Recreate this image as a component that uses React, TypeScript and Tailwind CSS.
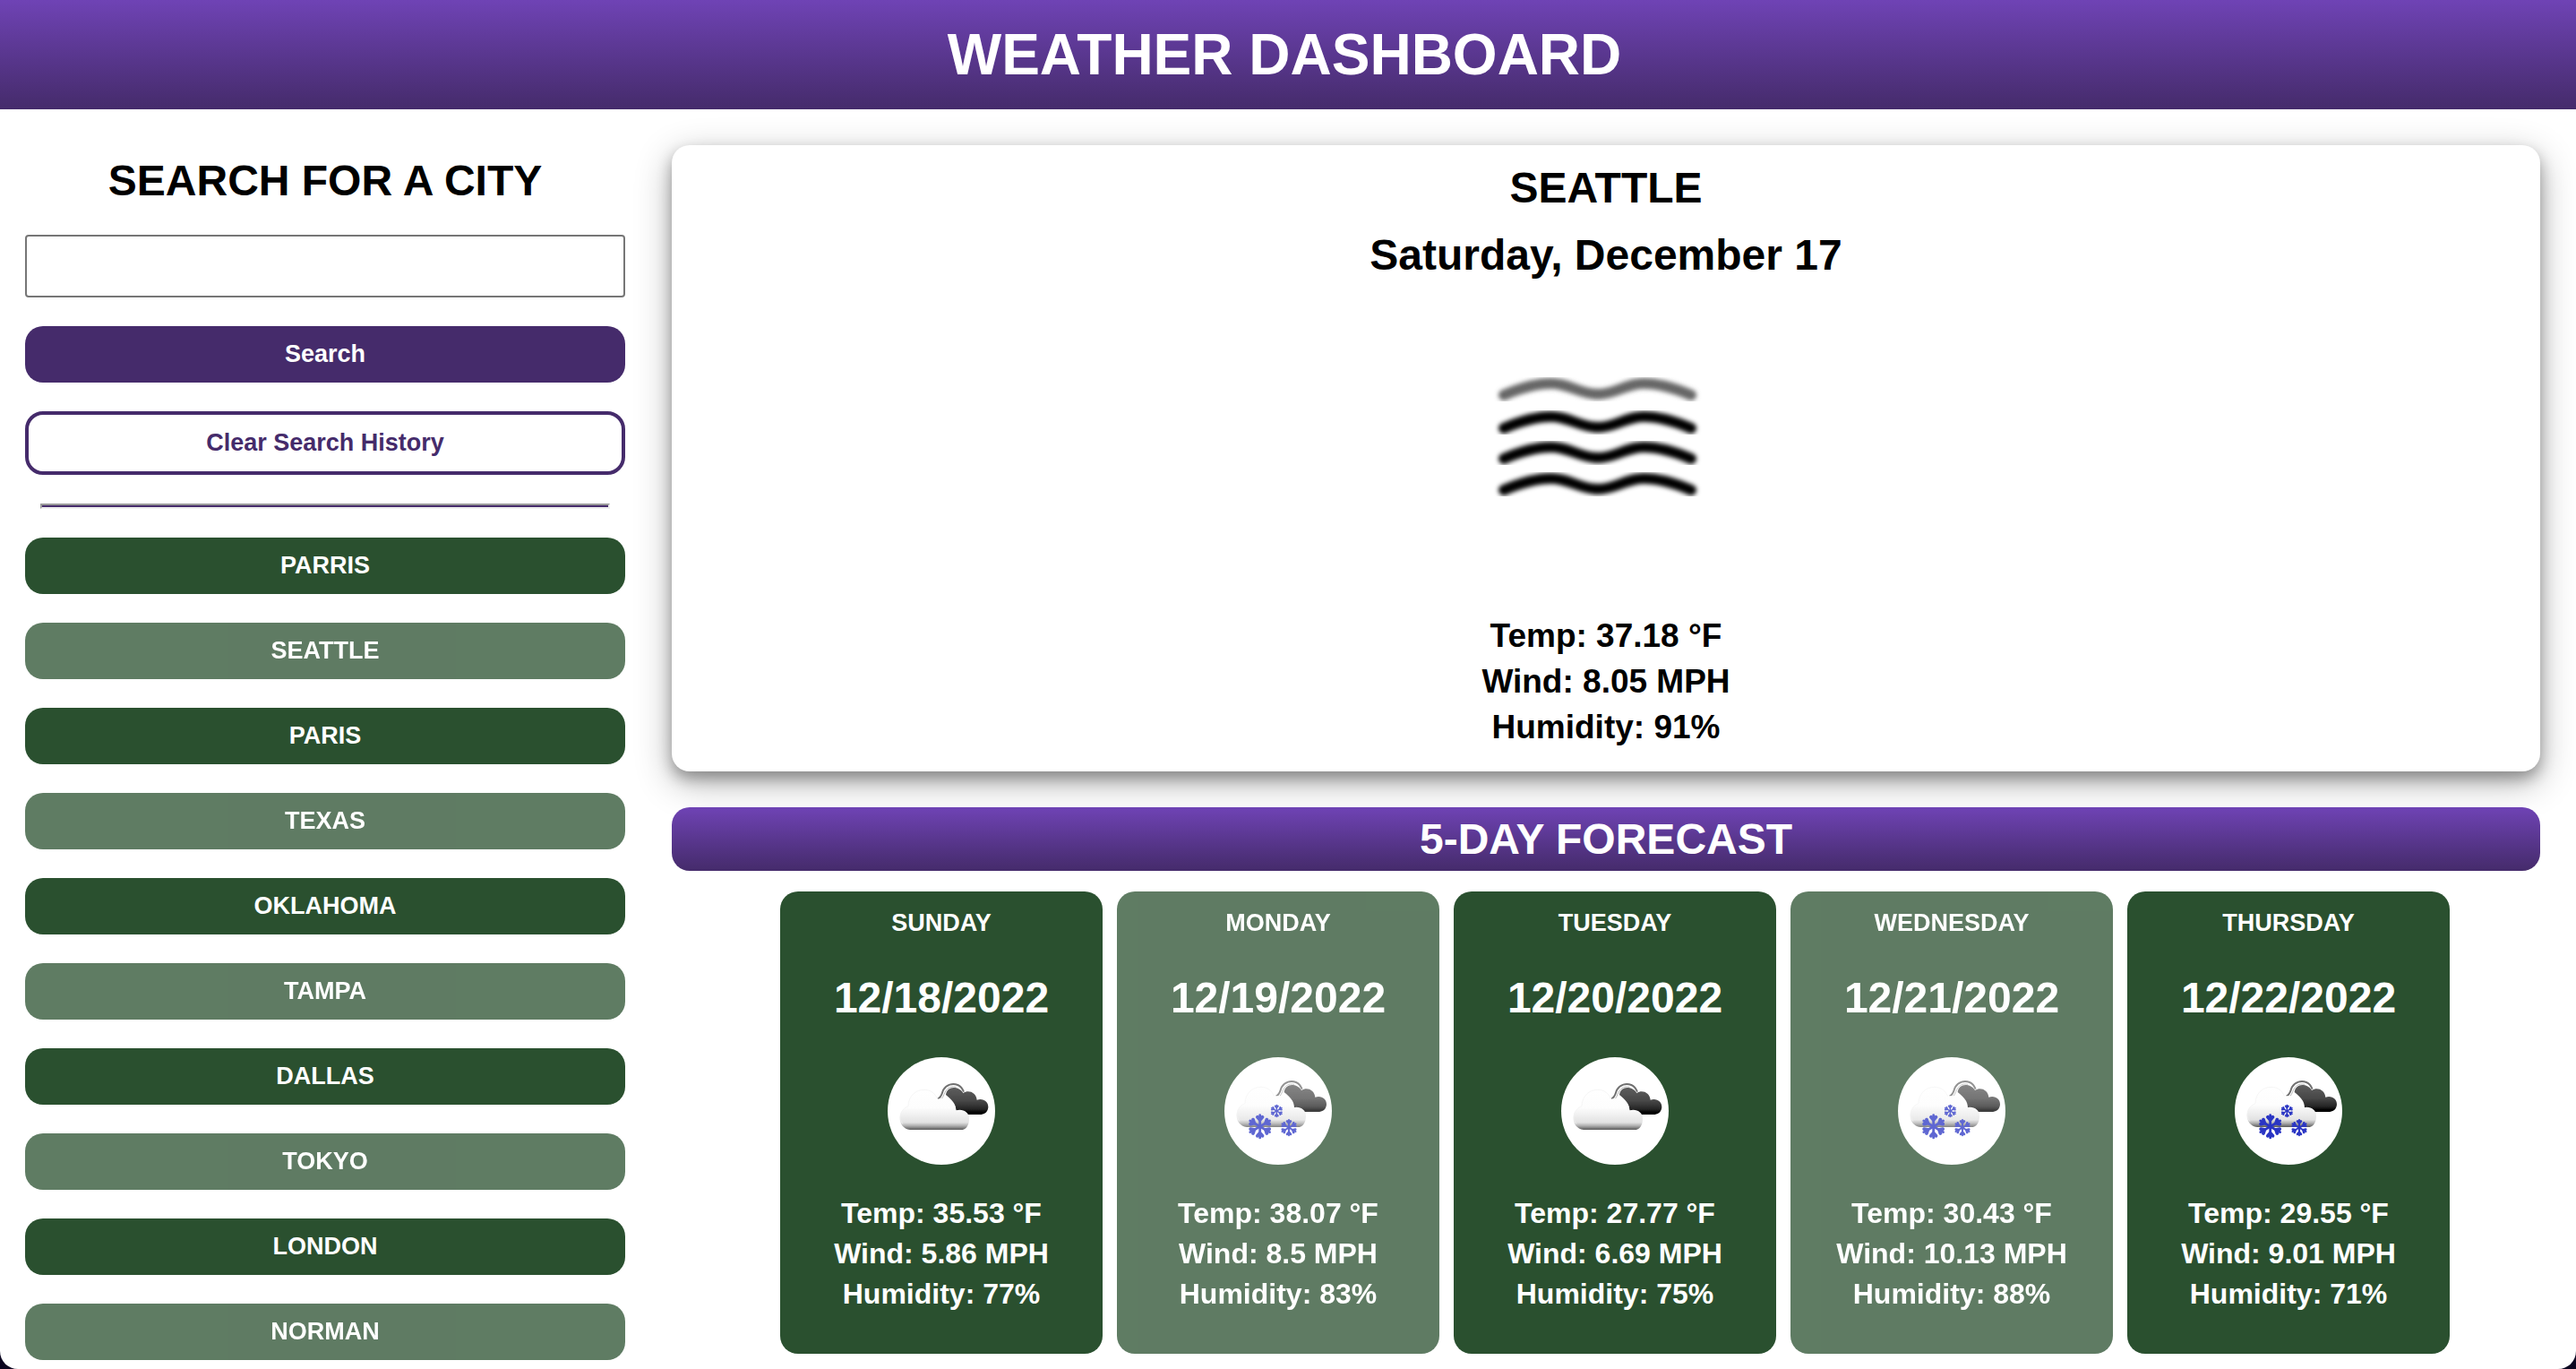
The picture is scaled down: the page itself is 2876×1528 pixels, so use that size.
import React from "react";

const cities = ["PARRIS", "SEATTLE", "PARIS", "TEXAS", "OKLAHOMA", "TAMPA", "DALLAS", "TOKYO", "LONDON", "NORMAN"];

const days = [
  { day: "SUNDAY", date: "12/18/2022", snow: false, temp: "35.53", wind: "5.86", humidity: "77" },
  { day: "MONDAY", date: "12/19/2022", snow: true, temp: "38.07", wind: "8.5", humidity: "83" },
  { day: "TUESDAY", date: "12/20/2022", snow: false, temp: "27.77", wind: "6.69", humidity: "75" },
  { day: "WEDNESDAY", date: "12/21/2022", snow: true, temp: "30.43", wind: "10.13", humidity: "88" },
  { day: "THURSDAY", date: "12/22/2022", snow: true, temp: "29.55", wind: "9.01", humidity: "71" },
];

function FogIcon() {
  const rows = [
    { y: 51, color: "#666" },
    { y: 88, color: "#000" },
    { y: 122, color: "#000" },
    { y: 157, color: "#000" },
  ];
  return (
    <svg viewBox="0 0 306 372" className="h-[372px] w-[306px]" role="img" aria-label="Fog">
      <defs>
        <filter id="fog-soft" x="-10%" y="-50%" width="120%" height="200%">
          <feGaussianBlur stdDeviation="2.5" />
        </filter>
      </defs>
      <g transform="translate(0 77)" fill="none" strokeWidth="12" strokeLinecap="round">
        {rows.map((r) => (
          <path
            key={r.y}
            filter="url(#fog-soft)"
            stroke={r.color}
            d={`M39 ${r.y + 1} C60 ${r.y - 8} 75 ${r.y - 12} 92 ${r.y - 12} C112 ${r.y - 12} 124 ${r.y} 144 ${r.y} C164 ${r.y} 175 ${r.y - 12} 195 ${r.y - 12} C212 ${r.y - 12} 227 ${r.y - 8} 248 ${r.y + 1}`}
          />
        ))}
      </g>
    </svg>
  );
}

function Flake({ x, y, r }: { x: number; y: number; r: number }) {
  return (
    <g transform={`translate(${x} ${y}) scale(${r / 40})`} stroke="#2b36c4" fill="none" strokeLinecap="round">
      {[0, 60, 120, 180, 240, 300].map((a) => (
        <g key={a} transform={`rotate(${a})`}>
          <path d="M0 -2 L0 -36" strokeWidth="8" />
          <path d="M-8 -30 L0 -21 L8 -30" strokeWidth="11" />
        </g>
      ))}
    </g>
  );
}

function CloudIcon({ snow }: { snow: boolean }) {
  return (
    <svg
      viewBox="33 30 360 360"
      className="size-[120px] rounded-full bg-white"
      role="img"
      aria-label={snow ? "Snow" : "Broken clouds"}
    >
      <defs>
        <linearGradient id="dark-cloud" x1="0" y1="130" x2="0" y2="222" gradientUnits="userSpaceOnUse">
          <stop offset="0" stopColor="#5e5e5e" />
          <stop offset="0.5" stopColor="#484848" />
          <stop offset="0.8" stopColor="#262626" />
          <stop offset="0.92" stopColor="#000" />
        </linearGradient>
        <linearGradient id="light-cloud" x1="0" y1="138" x2="0" y2="273" gradientUnits="userSpaceOnUse">
          <stop offset="0" stopColor="#fff" />
          <stop offset="0.45" stopColor="#fdfdfd" />
          <stop offset="0.82" stopColor="#e2e2e2" />
          <stop offset="0.9" stopColor="#b0b0b0" />
          <stop offset="1" stopColor="#5a5a5a" />
        </linearGradient>
        <filter id="cloud-soft" x="-10%" y="-10%" width="120%" height="120%">
          <feGaussianBlur stdDeviation="2.2" />
        </filter>
      </defs>
      <g filter="url(#cloud-soft)">
        <g transform={snow ? "translate(5 -9)" : undefined}>
          <path
            fill="url(#dark-cloud)"
            d="M228 156 C230 138 244 130 258 132 C272 134 282 142 286 150 C304 138 330 148 332 173 C352 166 371 178 370 198 C368 216 355 222 342 222 L285 222 C275 214 264 212 262 208 C262 186 248 172 228 156 Z"
          />
          <path
            fill="none"
            stroke="#707070"
            strokeWidth="6"
            d="M201 170 C216 162 214 150 220 139 C230 122 250 116 268 123 C278 127 284 136 288 146"
          />
          <path fill="none" stroke="#b5b5b5" strokeWidth="3" d="M212 172 C222 160 222 150 230 140 C238 130 250 127 262 130" />
        </g>
        <g transform={snow ? "translate(0 -9)" : undefined}>
          <path
            fill="url(#light-cloud)"
            d="M108 273 C65 268 62 208 102 194 C102 158 130 138 156 139 C178 139 192 152 200 170 C232 162 262 182 262 208 C286 202 306 214 306 236 C306 258 296 270 284 273 Z"
          />
          <path
            fill="none"
            stroke="#f0f0f0"
            strokeWidth="2"
            d="M84 254 C68 234 74 204 102 194 C102 158 130 138 156 139 C178 139 192 152 200 170"
          />
        </g>
        {snow && (
          <>
            <Flake x={152} y={262} r={42} />
            <Flake x={208} y={210} r={22} />
            <Flake x={249} y={266} r={29} />
          </>
        )}
      </g>
    </svg>
  );
}

export default function App() {
  return (
    <div className="min-h-screen bg-[#0b0620] font-['Liberation_Sans',Arial,sans-serif] font-bold text-black">
      <div className="min-h-screen overflow-hidden rounded-b-[20px] bg-white">
        <header className="bg-linear-to-b from-[#6f43b5] to-[#452b6b] py-6 pr-2 text-center text-white">
          <h1 className="text-[64px] leading-[74px]">WEATHER DASHBOARD</h1>
        </header>

        <main className="grid grid-cols-[670fr_2086fr] gap-[52px] pr-10 pl-7">
          <aside className="flex flex-col gap-8 pt-[52px] text-[27px] leading-[31px]">
            <h2 className="pb-px text-center text-[48px] leading-[55px]">
              <label htmlFor="city">SEARCH FOR A CITY</label>
            </h2>
            <input
              id="city"
              type="text"
              className="h-[70px] w-full rounded-[4px] border-2 border-[#767676] bg-white px-4"
            />
            <button className="rounded-[20px] bg-[#452b6b] py-4 text-white">Search</button>
            <button className="rounded-[20px] border-4 border-[#452b6b] bg-white py-4 text-[#452b6b]">
              Clear Search History
            </button>
            <hr className="mx-auto h-[6px] w-[95%] border-2 border-t-[#9a9a9a] border-r-[#eeeeee] border-b-[#eeeeee] border-l-[#9a9a9a] bg-[#452b6b]" />
            <div className="flex flex-col gap-8">
              {cities.map((c) => (
                <button key={c} className="rounded-[20px] bg-[#2a502f] py-4 text-white even:opacity-75">
                  {c}
                </button>
              ))}
            </div>
          </aside>

          <div className="pt-10">
            <section className="flex flex-col items-center rounded-[20px] bg-white pt-5 pb-6 text-center shadow-[0_8px_16px_rgba(0,0,0,0.3),0_12px_40px_rgba(0,0,0,0.3)]">
              <h2 className="text-[48px] leading-[55px]">SEATTLE</h2>
              <h2 className="mt-5 text-[48px] leading-[55px]">Saturday, December 17</h2>
              <FogIcon />
              <div className="text-[37px] leading-[51px]">
                <p>Temp: 37.18 °F</p>
                <p>Wind: 8.05 MPH</p>
                <p>Humidity: 91%</p>
              </div>
            </section>

            <h2 className="relative mt-10 rounded-[20px] bg-linear-to-b from-[#6f43b5] to-[#452b6b] py-2 text-center text-[48px] leading-[55px] text-white">
              5-DAY FORECAST
            </h2>

            <div className="mt-[23px] flex justify-center gap-4 pl-5">
              {days.map((d) => (
                <article
                  key={d.day}
                  className="flex w-[360px] flex-col items-center rounded-[20px] bg-[#2a502f] pt-5 pb-11 text-center text-white even:opacity-75"
                >
                  <p className="text-[27px] leading-[31px]">{d.day}</p>
                  <h3 className="mt-10 mb-[39px] text-[48px] leading-[55px]">{d.date}</h3>
                  <CloudIcon snow={d.snow} />
                  <div className="mt-8 text-[32px] leading-[45px]">
                    <p>Temp: {d.temp} °F</p>
                    <p>Wind: {d.wind} MPH</p>
                    <p>Humidity: {d.humidity}%</p>
                  </div>
                </article>
              ))}
            </div>
          </div>
        </main>
      </div>
    </div>
  );
}
